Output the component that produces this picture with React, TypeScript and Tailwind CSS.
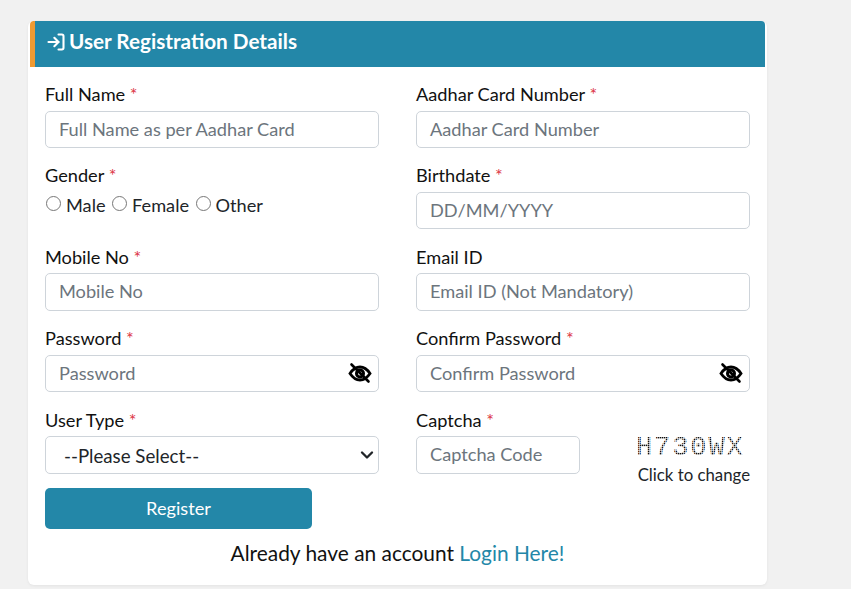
import { ChevronDown, LogIn } from "lucide-react";
import type { ReactNode } from "react";

function EyeOff() {
  return (
    <svg viewBox="0 0 24 24" className="h-[24px] w-[24px]" fill="none" stroke="#000">
      <path d="M2 12.500C5 8 8.500 6 12 6s7 2 10 6.500c-3 4.500-6.500 6.500-10 6.500S5 17 2 12.500z" strokeWidth="2.800" />
      <circle cx="12" cy="12.500" r="3.500" strokeWidth="3" />
      <path d="M3.500 3.500l17 17" strokeWidth="2.600" strokeLinecap="round" />
    </svg>
  );
}

function Field({ label, required, children }: { label: string; required?: boolean; children: ReactNode }) {
  return (
    <div className="h-[81.4px]">
      <div className="h-[24px] text-[18.200px] leading-[22px] text-[#111]">
        {label} {required && <span className="text-[#dc3545]">*</span>}
      </div>
      {children}
    </div>
  );
}

function TextBox({ placeholder, eye }: { placeholder: string; eye?: boolean }) {
  return (
    <div className="mt-[3.500px] flex h-[37.500px] items-center justify-between rounded-[5px] border border-[#ced4da] bg-white pl-[13px] pr-[6px]">
      <span className="text-[18.200px] text-[#6c757d]">{placeholder}</span>
      {eye && <EyeOff />}
    </div>
  );
}

export default function App() {
  return (
    <div className="h-[589px] w-[851px] overflow-hidden bg-[#f1f1f1] pl-[28px] pt-[21px] font-['Lato','Noto_Sans',sans-serif]">
      <div className="h-[564px] w-[739px] rounded-[6px] bg-white shadow-[0_1px_3px_rgba(0,0,0,0.06)]">
        <div className="mx-[2px] flex h-[46px] items-center gap-[3px] rounded-t-[4px] border-l-[5px] border-[#ee9a32] bg-[#2387a8] pb-[4px] pl-[11px] text-white">
          <LogIn className="h-[20px] w-[20px]" strokeWidth={2.500} />
          <span className="text-[20.700px] font-bold">User Registration Details</span>
        </div>

        <div className="grid grid-cols-[334px_334px] gap-x-[37px] pl-[17px] pt-[16px]">
          <Field label="Full Name" required>
            <TextBox placeholder="Full Name as per Aadhar Card" />
          </Field>
          <Field label="Aadhar Card Number" required>
            <TextBox placeholder="Aadhar Card Number" />
          </Field>

          <Field label="Gender" required>
            <div className="mt-[5px] flex items-center text-[18.200px] leading-[24px] text-[#212529]">
              <span className="mb-[4px] ml-[1px] mr-[5px] h-[15px] w-[15px] rounded-full border border-[#777]" />
              <span className="mr-[6.500px]">Male</span>
              <span className="mb-[4px] mr-[5px] h-[15px] w-[15px] rounded-full border border-[#777]" />
              <span className="mr-[6.500px]">Female</span>
              <span className="mb-[4px] mr-[5px] h-[15px] w-[15px] rounded-full border border-[#777]" />
              <span>Other</span>
            </div>
          </Field>
          <Field label="Birthdate" required>
            <TextBox placeholder="DD/MM/YYYY" />
          </Field>

          <Field label="Mobile No" required>
            <TextBox placeholder="Mobile No" />
          </Field>
          <Field label="Email ID">
            <TextBox placeholder="Email ID (Not Mandatory)" />
          </Field>

          <Field label="Password" required>
            <TextBox placeholder="Password" eye />
          </Field>
          <Field label="Confirm Password" required>
            <TextBox placeholder="Confirm Password" eye />
          </Field>

          <Field label="User Type" required>
            <div className="mt-[3.500px] flex h-[37.500px] items-center justify-between rounded-[5px] border border-[#ced4da] bg-white pl-[18px] pr-[1px] text-[18.700px] text-[#212529]">
              <span className="pt-[2px]">--Please Select--</span>
              <ChevronDown className="h-[20px] w-[20px]" strokeWidth={2.800} />
            </div>
          </Field>
          <Field label="Captcha" required>
            <div className="flex">
              <div className="w-[164px]">
                <TextBox placeholder="Captcha Code" />
              </div>
              <div className="ml-[58px] flex flex-col">
                <svg width="114" height="32" className="-ml-[2px] block">
                  <defs>
                    <pattern id="captcha-dots" width="2" height="2" patternUnits="userSpaceOnUse">
                      <rect width="1.400" height="1.400" fill="#111" />
                    </pattern>
                  </defs>
                  <text x="0" y="22" fontFamily="Liberation Mono, monospace" fontSize="27" letterSpacing="1.900" fill="url(#captcha-dots)">
                    H730WX
                  </text>
                </svg>
                <span className="whitespace-nowrap text-[16.800px] leading-[20px] text-[#212529]">Click to change</span>
              </div>
            </div>
          </Field>
        </div>

        <div className="-mt-[2px] pl-[17px]">
          <button className="h-[41px] w-[267px] rounded-[5px] bg-[#2387a8] text-[18.200px] text-white">Register</button>
        </div>
        <p className="mt-[10px] text-center text-[20.900px] leading-[28px] text-[#111]">
          Already have an account <span className="text-[#2387a8]">Login Here!</span>
        </p>
      </div>
    </div>
  );
}
